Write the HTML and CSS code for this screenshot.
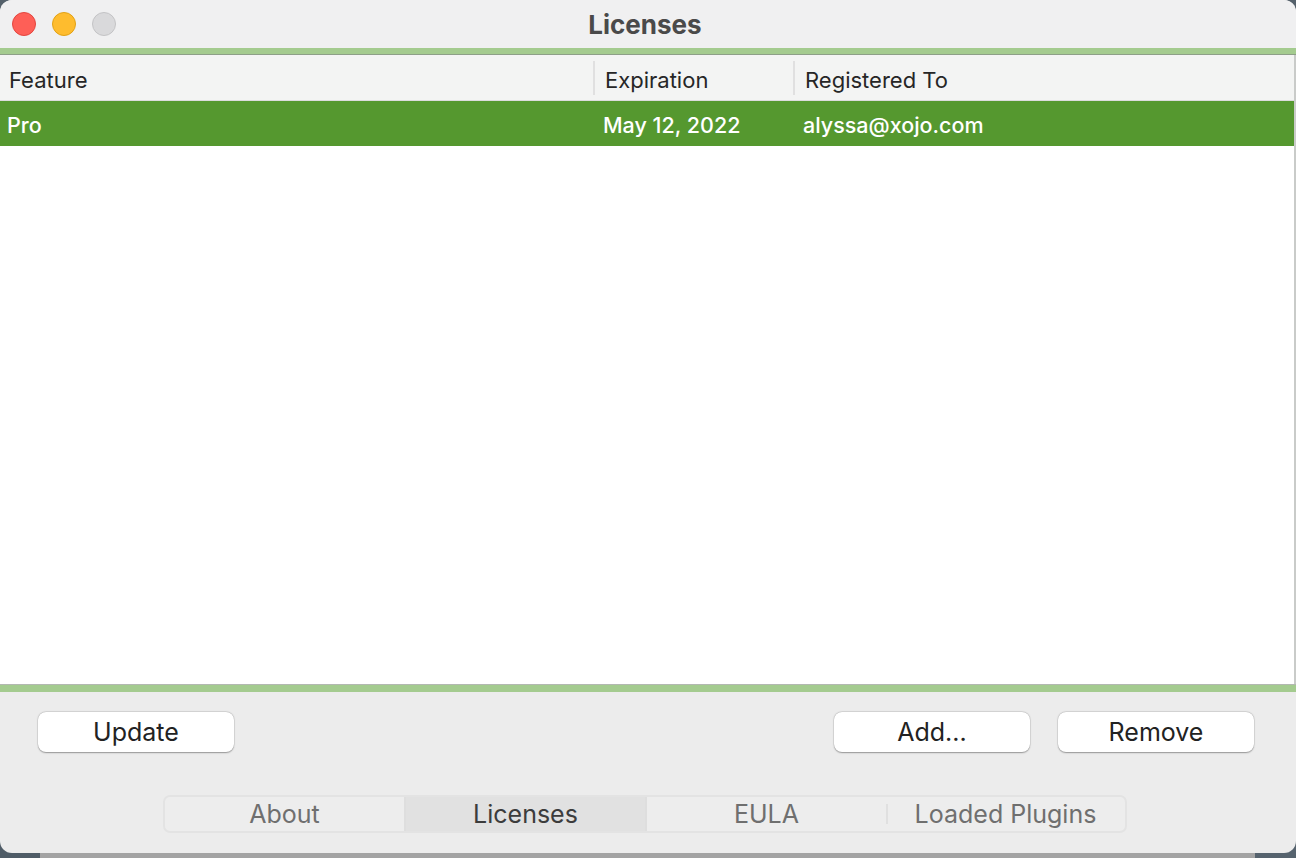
FILE: index.html
```html
<!DOCTYPE html>
<html>
<head>
<meta charset="utf-8">
<link rel="stylesheet" href="styles.css">
</head>
<body>
<div class="screen">
  <div class="window">
    <div class="titlebar">
      <div class="lights">
        <span class="light red"></span>
        <span class="light yellow"></span>
        <span class="light gray"></span>
      </div>
      <div class="title">Licenses</div>
      <div></div>
    </div>
    <div class="greenbar top"></div>
    <div class="list">
      <div class="lrow header">
        <div class="cell">Feature</div>
        <div class="cell sep">Expiration</div>
        <div class="cell sep">Registered To</div>
      </div>
      <div class="lrow selected">
        <div class="cell first">Pro</div>
        <div class="cell">May 12, 2022</div>
        <div class="cell">alyssa@xojo.com</div>
      </div>
    </div>
    <div class="greenbar bottom"></div>
    <div class="footer">
      <div class="buttons">
        <button class="btn">Update</button>
        <div class="spacer"></div>
        <button class="btn">Add...</button>
        <button class="btn">Remove</button>
      </div>
      <div class="segments">
        <div class="seg">About</div>
        <div class="seg active">Licenses</div>
        <div class="seg">EULA</div>
        <div class="seg short">Loaded Plugins</div>
      </div>
    </div>
  </div>
  <div class="desk">
    <div class="desk-a"></div>
    <div class="desk-b"></div>
    <div class="desk-c"></div>
  </div>
</div>
</body>
</html>
```

FILE: styles.css
```css
html, body {
  margin: 0;
  padding: 0;
}
body {
  width: 1296px;
  height: 858px;
  overflow: hidden;
  background: #55616b;
  font-family: Inter, "Liberation Sans", sans-serif;
}
.screen {
  position: relative;
  width: 1296px;
  height: 858px;
}
.window {
  position: relative;
  z-index: 1;
  width: 1296px;
  height: 853px;
  display: flex;
  flex-direction: column;
  background: #ececec;
  border-radius: 12px;
  overflow: hidden;
}
.desk {
  display: flex;
  height: 13px;
  margin-top: -8px;
}
.desk-a { width: 40px; background: #4f5c67; }
.desk-b { flex: 1; background: #a3a3a3; }
.desk-c { width: 41px; background: #56636e; }

.titlebar {
  height: 48px;
  flex: none;
  background: #f0f0f1;
  display: grid;
  grid-template-columns: 1fr auto 1fr;
  align-items: center;
}
.lights {
  display: flex;
  gap: 16px;
  padding-left: 12px;
}
.light {
  width: 24px;
  height: 24px;
  border-radius: 50%;
  box-sizing: border-box;
}
.light.red { background: #fe5f57; border: 1px solid #e2463f; }
.light.yellow { background: #febc2e; border: 1px solid #e1a116; }
.light.gray { background: #d9d9db; border: 1px solid #c3c3c5; }
.title {
  font-size: 26px;
  font-weight: 700;
  color: #4a4a4a;
  padding-top: 1px;
  margin-right: 6px;
}

.greenbar {
  flex: none;
  background: #a4cb8f;
}
.greenbar.top {
  height: 6px;
  border-bottom: 1px solid #8d9f87;
}
.greenbar.bottom {
  height: 7px;
  border-top: 1px solid #b3b8b1;
}

.list {
  flex: 1;
  background: #ffffff;
  border-right: 2px solid #c9cbc9;
}
.lrow {
  display: grid;
  grid-template-columns: 593px 200px 1fr;
  height: 45px;
  align-items: center;
}
.header {
  background: #f3f4f3;
  border-bottom: 1px solid #dcdcdc;
  color: #262626;
  font-size: 22px;
}
.header .cell {
  padding-left: 9px;
  height: 34px;
  padding-top: 4px;
  box-sizing: border-box;
  display: flex;
  align-items: center;
}
.header .cell.sep {
  border-left: 2px solid #e0e0e0;
  padding-left: 10px;
}
.selected {
  background: #55982f;
  color: #ffffff;
  font-size: 21.5px;
  font-weight: 500;
}
.selected .cell {
  padding-left: 10px;
  padding-top: 2px;
}
.selected .cell.first {
  padding-left: 7px;
}

.footer {
  height: 161px;
  flex: none;
  box-sizing: border-box;
  padding-top: 20px;
  display: flex;
  flex-direction: column;
}
.buttons {
  display: flex;
  padding: 0 42px 0 38px;
  gap: 28px;
}
.spacer { flex: 1; }
.btn {
  width: 196px;
  height: 40px;
  border: none;
  border-radius: 8px;
  background: #ffffff;
  box-shadow: 0 0.5px 1.5px rgba(0,0,0,0.35), 0 0 0 0.5px rgba(0,0,0,0.08);
  font-family: inherit;
  font-size: 25px;
  color: #222222;
  padding: 0;
}
.segments {
  margin-top: 43px;
  margin-left: 163px;
  width: 964px;
  height: 38px;
  box-sizing: border-box;
  display: flex;
  border: 2px solid #e3e3e3;
  border-radius: 7px;
  background: #ededed;
  overflow: hidden;
}
.seg {
  flex: 1;
  display: flex;
  align-items: center;
  justify-content: center;
  font-size: 25px;
  color: #6f6f6f;
  border-left: 2px solid #dedede;
}
.seg:first-child { border-left: none; }
.seg.active {
  background: #e1e1e1;
  color: #3c3c3c;
}
.seg.short {
  border-left: none;
  position: relative;
}
.seg.short::before {
  content: "";
  position: absolute;
  left: 0;
  top: 7px;
  bottom: 7px;
  width: 2px;
  background: #e0e0e0;
}
```
